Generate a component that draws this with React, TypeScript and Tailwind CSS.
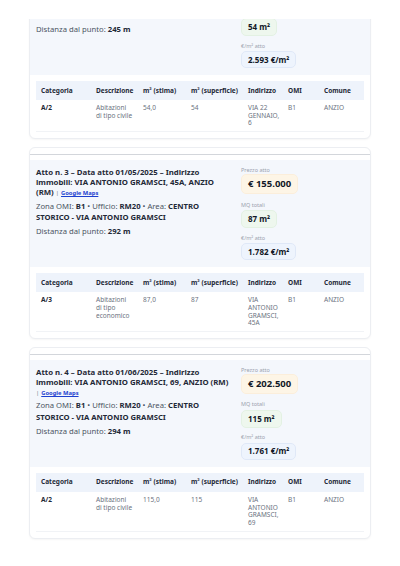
import React from "react";

type Row = {
  cat: string;
  desc: string;
  stima: string;
  sup: string;
  addr: string;
  omi: string;
  comune: string;
};

type Atto = {
  n: number;
  data: string;
  addr: string;
  zonaArea: string;
  dist: string;
  prezzo: string;
  mq: string;
  eurmq: string;
  row: Row;
};

const atti: Atto[] = [
  {
    n: 2,
    data: "01/04/2025",
    addr: "VIA VENTIDUE GENNAIO, 6, ANZIO (RM)",
    zonaArea: "CENTRO",
    dist: "245 m",
    prezzo: "€ 140.000",
    mq: "54 m²",
    eurmq: "2.593 €/m²",
    row: {
      cat: "A/2",
      desc: "Abitazioni di tipo civile",
      stima: "54,0",
      sup: "54",
      addr: "VIA 22 GENNAIO, 6",
      omi: "B1",
      comune: "ANZIO",
    },
  },
  {
    n: 3,
    data: "01/05/2025",
    addr: "VIA ANTONIO GRAMSCI, 45A, ANZIO (RM)",
    zonaArea: "CENTRO STORICO - VIA ANTONIO GRAMSCI",
    dist: "292 m",
    prezzo: "€ 155.000",
    mq: "87 m²",
    eurmq: "1.782 €/m²",
    row: {
      cat: "A/3",
      desc: "Abitazioni di tipo economico",
      stima: "87,0",
      sup: "87",
      addr: "VIA ANTONIO GRAMSCI, 45A",
      omi: "B1",
      comune: "ANZIO",
    },
  },
  {
    n: 4,
    data: "01/06/2025",
    addr: "VIA ANTONIO GRAMSCI, 69, ANZIO (RM)",
    zonaArea: "CENTRO STORICO - VIA ANTONIO GRAMSCI",
    dist: "294 m",
    prezzo: "€ 202.500",
    mq: "115 m²",
    eurmq: "1.761 €/m²",
    row: {
      cat: "A/2",
      desc: "Abitazioni di tipo civile",
      stima: "115,0",
      sup: "115",
      addr: "VIA ANTONIO GRAMSCI, 69",
      omi: "B1",
      comune: "ANZIO",
    },
  },
];

function Card({ a }: { a: Atto }) {
  return (
    <div className="rounded-[6px] border border-[#eceef2] bg-white shadow-[0_1px_2px_rgba(0,0,0,0.04)] overflow-hidden">
      <div className="h-[6px]" />
      <div className="h-px bg-[#d3d6db]" />
      <div className="h-[5px]" />
      <div className="flex bg-[#f4f7fc] px-[6px] pt-[7px] pb-[7px]">
        <div className="w-[196px] text-[#1f2937]">
          <div className="text-[7.8px] font-bold leading-[10px]">
            Atto n. {a.n} – Data atto {a.data} – Indirizzo immobili: {a.addr}{" "}
            <span className="text-[5.8px] font-normal text-[#6b7280]">|</span>{" "}
            <span className="text-[5.8px] font-bold text-[#1d3fcf] underline">Google Maps</span>
          </div>
          <div className="mt-[2.5px] text-[7.7px] leading-[11.5px] text-[#4b5563]">
            Zona OMI: <b className="text-[#1f2937]">B1</b> • Ufficio: <b className="text-[#1f2937]">RM20</b> • Area:{" "}
            <b className="text-[#1f2937]">{a.zonaArea}</b>
          </div>
          <div className="mt-[2.5px] text-[7.7px] leading-[11.5px] text-[#4b5563]">
            Distanza dal punto: <b className="text-[#1f2937]">{a.dist}</b>
          </div>
        </div>
        <div className="ml-[9px] flex flex-col items-start">
          <div className="text-[5.5px] leading-[7px] text-[#9ca3af]">Prezzo atto</div>
          <div className="flex h-[20px] items-center rounded-[5px] border border-[#fbeedb] bg-[#fdf5e6] px-[6px] text-[9.5px] font-bold text-[#111827]">
            {a.prezzo}
          </div>
          <div className="mt-[7.5px] text-[5.5px] leading-[7px] text-[#9ca3af]">MQ totali</div>
          <div className="mt-[1.5px] flex h-[18px] items-center rounded-[5px] border border-[#e3f1e3] bg-[#eef7ee] px-[6px] text-[8px] font-bold text-[#111827]">
            {a.mq}
          </div>
          <div className="mt-[6.5px] text-[5.5px] leading-[7px] text-[#9ca3af]">€/m² atto</div>
          <div className="mt-[1.5px] flex h-[17px] items-center rounded-[5px] border border-[#dfe8f7] bg-[#eef4fd] px-[6px] text-[8px] font-bold text-[#111827]">
            {a.eurmq}
          </div>
        </div>
      </div>
      <div className="px-[6px] pb-[6px] pt-[6px]">
        <table className="w-full table-fixed border-collapse text-left text-[6.5px]">
          <colgroup>
            <col className="w-[55px]" />
            <col className="w-[47px]" />
            <col className="w-[48px]" />
            <col className="w-[57px]" />
            <col className="w-[40px]" />
            <col className="w-[36px]" />
            <col />
          </colgroup>
          <thead>
            <tr className="h-[19px] bg-[#eef3fb] font-bold leading-[8px] text-[#1f2937]">
              <th className="px-[5px]">Categoria</th>
              <th className="pl-[5px] pr-[3px]">Descrizione</th>
              <th className="px-[5px]">m² (stima)</th>
              <th className="px-[5px]">m² (superficie)</th>
              <th className="px-[5px]">Indirizzo</th>
              <th className="px-[5px]">OMI</th>
              <th className="px-[5px]">Comune</th>
            </tr>
          </thead>
          <tbody>
            <tr className="border-b border-[#f1f3f6] align-top leading-[7.7px] text-[#6b7280]">
              <td className="px-[5px] pb-[4px] pt-[4px] font-bold text-[#1f2937]">{a.row.cat}</td>
              <td className="pl-[5px] pr-[5px] pb-[4px] pt-[4px]">{a.row.desc}</td>
              <td className="px-[5px] pb-[4px] pt-[4px]">{a.row.stima}</td>
              <td className="px-[5px] pb-[4px] pt-[4px]">{a.row.sup}</td>
              <td className="px-[5px] pb-[4px] pt-[4px]">{a.row.addr}</td>
              <td className="px-[5px] pb-[4px] pt-[4px]">{a.row.omi}</td>
              <td className="px-[5px] pb-[4px] pt-[4px]">{a.row.comune}</td>
            </tr>
          </tbody>
        </table>
      </div>
    </div>
  );
}

export default function App() {
  return (
    <div className="relative h-[566px] overflow-hidden bg-white" style={{ fontFamily: '"Noto Sans", sans-serif' }}>
      <div className="absolute inset-x-0 top-0 z-10 h-[19px] bg-white" />
      <div className="mx-[29px] -mt-[45px] flex flex-col gap-[8px]">
        {atti.map((a) => (
          <Card key={a.n} a={a} />
        ))}
      </div>
    </div>
  );
}
